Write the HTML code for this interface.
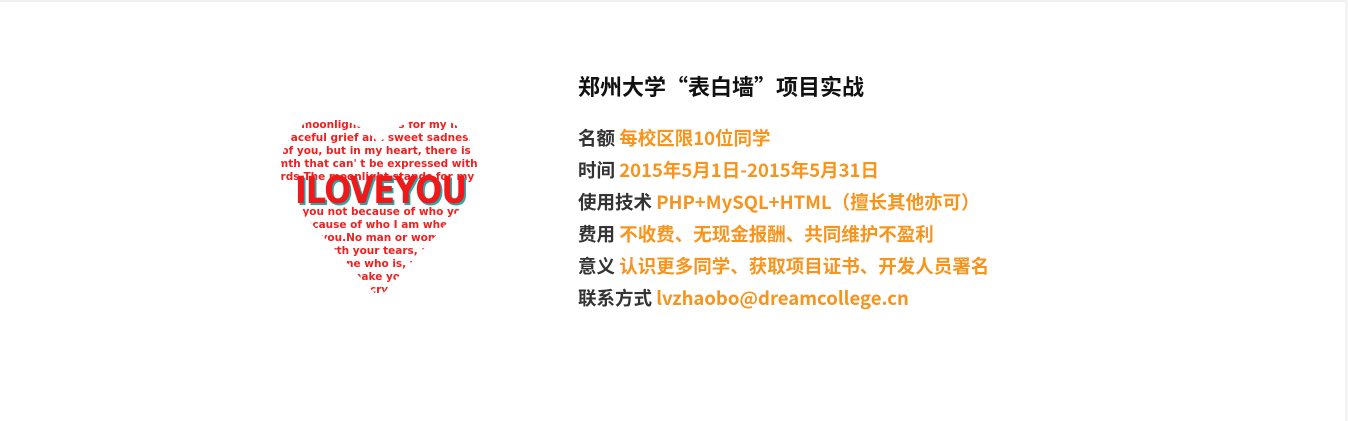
<!DOCTYPE html>
<html><head><meta charset="utf-8"><style>
html,body{margin:0;padding:0;background:#fff;width:1348px;height:421px;overflow:hidden;position:relative}
.topline{position:absolute;left:0;top:0;width:1348px;height:2px;background:#f0f0f0}
.right{position:absolute;right:0;top:0;width:3px;height:421px;background:#f3f3f3}
.heart{position:absolute;left:280px;top:116px;width:198px;height:182px;overflow:hidden;
clip-path:path('M99 182 L10 84 C-10 58 2 0 50 2 C74 4 92 18 99 28 C106 18 124 4 148 2 C196 0 208 58 188 84 Z');
font-family:"DejaVu Sans","Liberation Sans",sans-serif;font-weight:bold;color:#f02020;font-size:10.5px;line-height:13px;text-align:center;white-space:nowrap;padding-top:3px;box-sizing:border-box}
.heart div{margin-left:-60px;margin-right:-60px}
.big{position:absolute;left:240px;top:170px;width:282px;text-align:center;font-family:"DejaVu Sans","Liberation Sans",sans-serif;font-weight:bold;font-size:37px;letter-spacing:-1px;color:#f01818;text-shadow:2px 2px 0 #2aa8a8;line-height:42px}
.big span{display:inline-block;transform:scaleX(0.86)}
.info{position:absolute;left:578px;top:70px;font-family:"Noto Sans CJK SC","Liberation Sans",sans-serif;font-weight:bold}
h1{margin:0;font-size:22px;color:#111;line-height:32px}
.list{margin-top:20px}
.list p{margin:0;font-size:18.5px;line-height:32px;color:#333;white-space:nowrap}
.list span{color:#f7941d}
</style></head><body>
<div class="topline"></div><div class="right"></div>
<div class="heart">
<div>The moonlight stands for my heart</div>
<div>a graceful grief and sweet sadness to</div>
<div>think of you, but in my heart, there is a kind</div>
<div>warmth that can' t be expressed with any</div>
<div>of words.The moonlight stands for my heart</div>
<div style="height:22px"></div>
<div>I love you not because of who you are</div>
<div>but because of who I am when I am</div>
<div>with you.No man or woman is</div>
<div>worth your tears, and</div>
<div>the one who is, won't</div>
<div>make you</div>
<div>cry</div>
</div>
<div class="big"><span>ILOVEYOU</span></div>
<div class="info">
<h1>郑州大学“表白墙”项目实战</h1>
<div class="list">
<p>名额 <span>每校区限10位同学</span></p>
<p>时间 <span>2015年5月1日-2015年5月31日</span></p>
<p>使用技术 <span>PHP+MySQL+HTML（擅长其他亦可）</span></p>
<p>费用 <span>不收费、无现金报酬、共同维护不盈利</span></p>
<p>意义 <span>认识更多同学、获取项目证书、开发人员署名</span></p>
<p>联系方式 <span>lvzhaobo@dreamcollege.cn</span></p>
</div></div>
</body></html>
